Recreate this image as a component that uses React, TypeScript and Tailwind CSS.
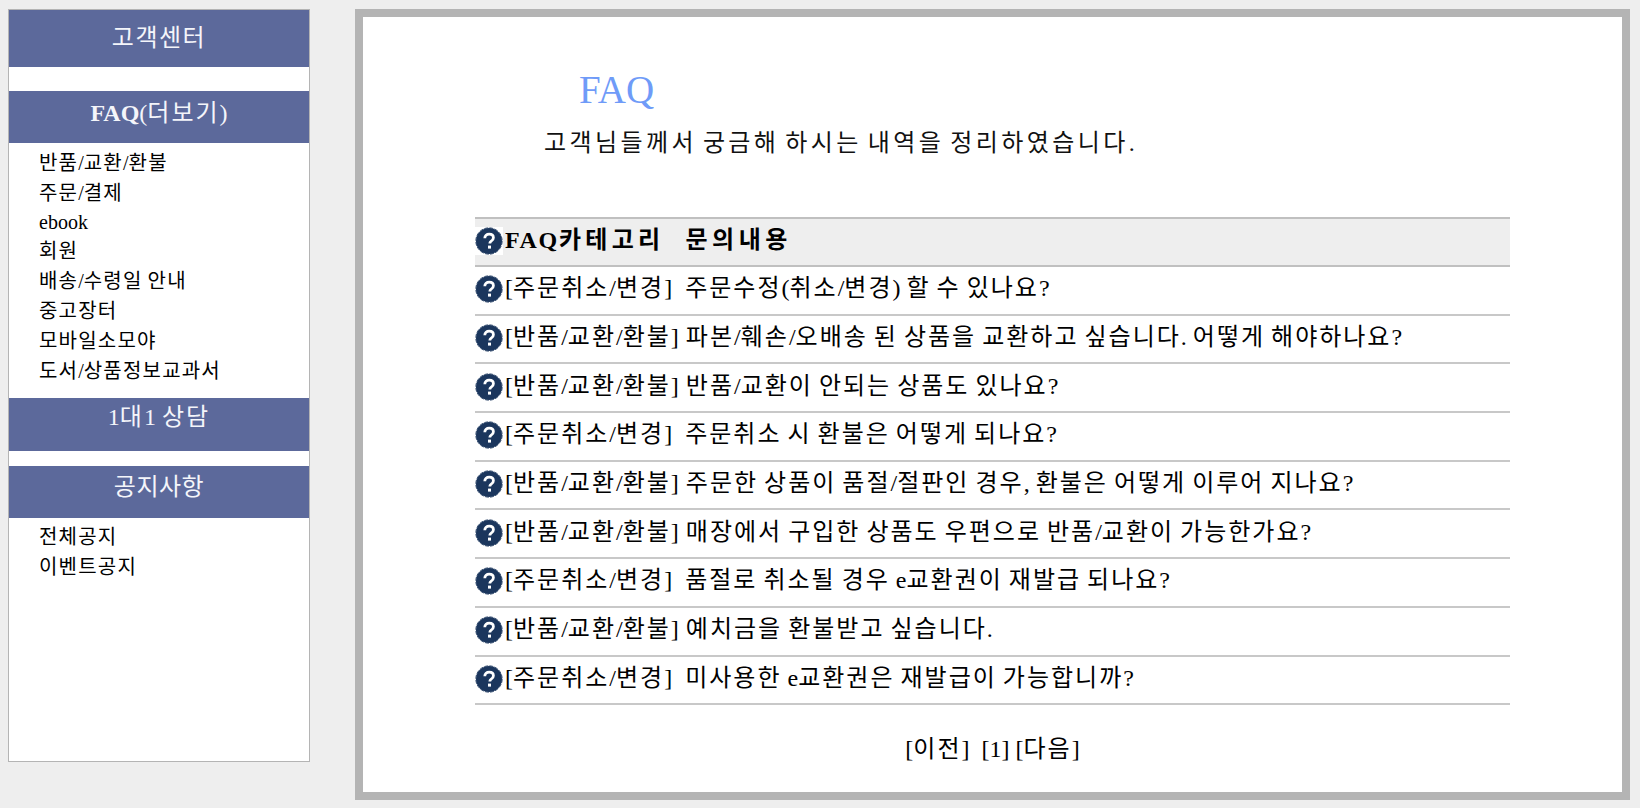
import type { ReactNode } from "react";

const FONT = "font-['Liberation_Serif','Noto_Sans_CJK_KR',serif]";

const FAQ_LINKS = ["반품/교환/환불", "주문/결제", "ebook", "회원", "배송/수령일 안내", "중고장터", "모바일소모야", "도서/상품정보교과서"];
const NOTICE_LINKS = ["전체공지", "이벤트공지"];

const ROWS = [
  ["[주문취소/변경]\u00a0", "주문수정(취소/변경) 할 수 있나요?"],
  ["[반품/교환/환불]", "파본/훼손/오배송 된 상품을 교환하고 싶습니다. 어떻게 해야하나요?"],
  ["[반품/교환/환불]", "반품/교환이 안되는 상품도 있나요?"],
  ["[주문취소/변경]\u00a0", "주문취소 시 환불은 어떻게 되나요?"],
  ["[반품/교환/환불]", "주문한 상품이 품절/절판인 경우, 환불은 어떻게 이루어 지나요?"],
  ["[반품/교환/환불]", "매장에서 구입한 상품도 우편으로 반품/교환이 가능한가요?"],
  ["[주문취소/변경]\u00a0", "품절로 취소될 경우 e교환권이 재발급 되나요?"],
  ["[반품/교환/환불]", "예치금을 환불받고 싶습니다."],
  ["[주문취소/변경]\u00a0", "미사용한 e교환권은 재발급이 가능합니까?"],
];

// hangul in the screenshot sets wider than Noto, latin doesn't, so only hangul runs get tracking
function Ko({ text, track }: { text: string; track: string }) {
  return (
    <>
      {text.split(/([가-힣]+)/).map((part, i) =>
        /[가-힣]/.test(part) ? (
          <span key={i} className={track}>
            {part}
          </span>
        ) : (
          part
        ),
      )}
    </>
  );
}

function QuestionIcon({ className = "" }: { className?: string }) {
  return (
    <svg width="28" height="28" viewBox="0 0 28 28" className={`shrink-0 ${className}`}>
      <circle cx="14" cy="14" r="13" fill="#1b365d" />
      <circle cx="14" cy="14" r="13.2" fill="none" stroke="#1b365d" strokeWidth="0.8" strokeDasharray="4 1.18" />
      <path d="M9.8 11.2c0-2.6 1.9-4.1 4.4-4.1s4.2 1.4 4.2 3.6c0 1.7-.9 2.6-2.2 3.4-1 .6-1.3 1-1.3 2v.4" fill="none" stroke="#fff" strokeWidth="2.8" />
      <rect x="13" y="18.6" width="3" height="3" fill="#fff" />
    </svg>
  );
}

function SideHeader({ children, className }: { children: ReactNode; className: string }) {
  return (
    <div className={`bg-[#5c699b] text-center text-[#f4f5fa] text-[24px] leading-[32px] ${className}`}>{children}</div>
  );
}

function SideLinks({ items }: { items: string[] }) {
  return (
    <ul className="pl-[30px] text-[20px] leading-[30px] text-black">
      {items.map((item) => (
        <li key={item} className={item === "ebook" ? "leading-[28px]" : ""}>
          <Ko text={item} track="tracking-[1.2px]" />
        </li>
      ))}
    </ul>
  );
}

export default function App() {
  return (
    <div className={`${FONT} flex h-[808px] w-[1640px] items-start overflow-hidden bg-[#eeeeee] pt-[9px]`}>
      {/* Sidebar */}
      <aside className="ml-[8px] h-[753px] w-[302px] shrink-0 border border-[#b4b4b4] bg-white">
        <SideHeader className="h-[57px] pt-[12px]">
          <Ko text="고객센터" track="tracking-[1.5px]" />
        </SideHeader>
        <SideHeader className="mt-[24px] h-[52px] pt-[6px]">
          <b>FAQ</b>
          <Ko text="(더보기)" track="tracking-[2px]" />
        </SideHeader>
        <div className="h-[255px] pt-[5px]">
          <SideLinks items={FAQ_LINKS} />
        </div>
        <SideHeader className="h-[53px] pt-[3px]">
          <Ko text="1대1 상담" track="tracking-[2px]" />
        </SideHeader>
        <SideHeader className="mt-[15px] h-[52px] pt-[5px]">
          <Ko text="공지사항" track="tracking-[0.5px]" />
        </SideHeader>
        <div className="pt-[4px]">
          <SideLinks items={NOTICE_LINKS} />
        </div>
      </aside>

      {/* Main panel */}
      <main className="ml-[45px] h-[791px] w-[1275px] shrink-0 border-[8px] border-[#b4b4b4] bg-white">
        <h1 className="ml-[216px] mt-[48px] text-[39px] leading-[50px] font-normal text-[#6f9bf8]">FAQ</h1>
        <p className="ml-[181px] mt-[11px] whitespace-nowrap text-[24px] leading-[34px] text-[#111]">
          <Ko text="고객님들께서 궁금해 하시는 내역을 정리하였습니다." track="tracking-[3.4px]" />
        </p>

        <div className="ml-[112px] mt-[57px] w-[1035px] border-t-2 border-[#c0c0c0] text-[24px] text-black">
          <div className="flex h-[48px] items-center whitespace-pre border-b-2 border-[#c0c0c0] bg-[#eeeeee] pb-[2px] font-bold">
            <QuestionIcon className="bg-white" />
            <span className="ml-[2px] pb-[2px]">
              <span className="tracking-[1.7px]">FAQ</span>
              <Ko text="카테고리" track="tracking-[4.3px]" />
            </span>
            <span className="ml-[21px] pb-[2px]">
              <Ko text="문의내용" track="tracking-[4.5px]" />
            </span>
          </div>
          {ROWS.map(([cat, text]) => (
            <div key={text} className="flex h-[48.7px] items-center whitespace-pre border-b-2 border-[#c8c8c8] pb-[2px]">
              <QuestionIcon />
              <span className="ml-[2px] pb-[2px]">
                <Ko text={cat} track="tracking-[2px]" />
              </span>
              <span className="ml-[7px] pb-[2px]">
                <Ko text={text} track="tracking-[2px]" />
              </span>
            </div>
          ))}
        </div>

        <div className="mt-[29px] ml-[112px] w-[1035px] text-center text-[24px] leading-[30px] text-black">
          <Ko text="[이전]" track="tracking-[2px]" />
          &nbsp; [1] <Ko text="[다음]" track="tracking-[2px]" />
        </div>
      </main>
    </div>
  );
}
